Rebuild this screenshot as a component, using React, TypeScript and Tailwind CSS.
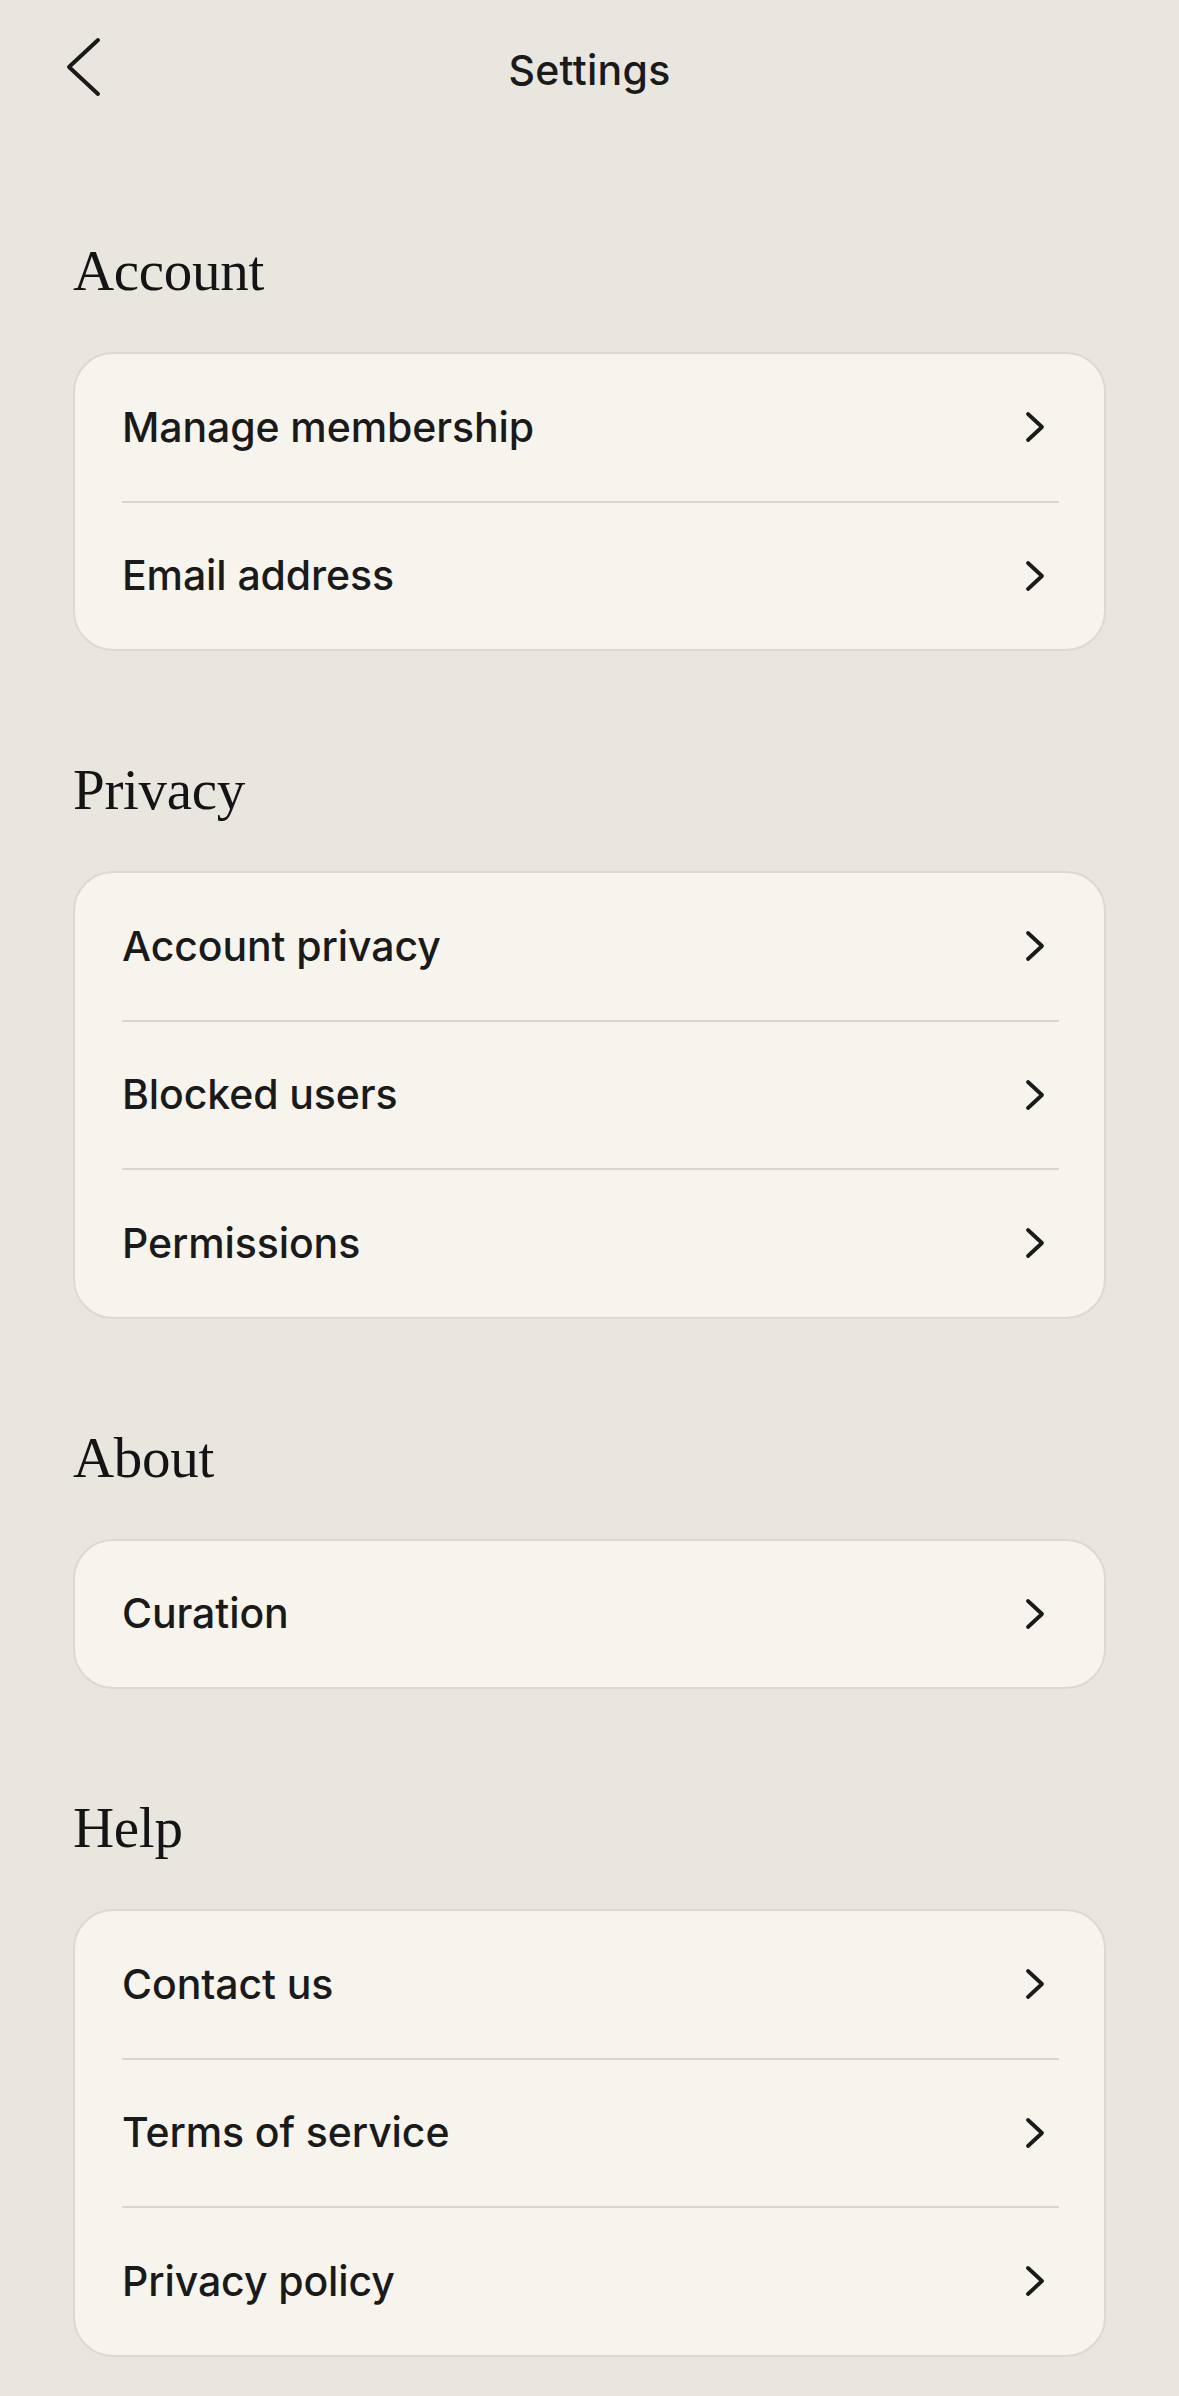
type Section = {
  title: string;
  items: string[];
};

const sections: Section[] = [
  { title: "Account", items: ["Manage membership", "Email address"] },
  { title: "Privacy", items: ["Account privacy", "Blocked users", "Permissions"] },
  { title: "About", items: ["Curation"] },
  { title: "Help", items: ["Contact us", "Terms of service", "Privacy policy"] },
];

const BackChevron = () => (
  <svg width="36" height="60" viewBox="0 0 36 60" fill="none" className="text-[#1a1a1a]">
    <polyline
      points="32,3 3,30 32,57"
      stroke="currentColor"
      strokeWidth="4"
      strokeLinecap="round"
      strokeLinejoin="round"
    />
  </svg>
);

const RowChevron = () => (
  <svg width="20" height="32" viewBox="0 0 20 32" fill="none" className="text-[#1a1a1a]">
    <polyline
      points="3,3 17,16 3,29"
      stroke="currentColor"
      strokeWidth="3.8"
      strokeLinecap="round"
      strokeLinejoin="round"
    />
  </svg>
);

const SettingsRow = ({ label, last }: { label: string; last: boolean }) => (
  <div className="ml-[47px] mr-[45px]">
    <div className="flex h-[146.5px] items-center justify-between">
      <span className="text-[41px] font-medium leading-none tracking-[-0.1px] text-[#1a1a1a]">{label}</span>
      <div className="mr-[14px]">
        <RowChevron />
      </div>
    </div>
    {!last && <div className="h-[2px] bg-[#d9d6cf]" />}
  </div>
);

export default function App() {
  return (
    <div
      className="min-h-screen bg-[#e9e6e0] px-[73px] pb-[40px]"
      style={{ fontFamily: "Inter, 'Noto Sans', sans-serif" }}
    >
      {/* Header */}
      <div className="-mx-[73px] grid h-[132px] grid-cols-[1fr_auto_1fr] items-center">
        <div className="pl-[66px] pt-[2px]">
          <BackChevron />
        </div>
        <h1 className="pt-[8px] text-[41px] font-medium leading-none tracking-[0.3px] text-[#1a1a1a]">
          Settings
        </h1>
        <div />
      </div>

      {sections.map((section) => (
        <section key={section.title} className="mt-[110px]">
          <h2
            className="mb-[54px] h-[56px] text-[57px] leading-none tracking-[-0.3px] text-[#141414]"
            style={{ fontFamily: "'Liberation Serif', 'DejaVu Serif', serif" }}
          >
            {section.title}
          </h2>
          <div className="overflow-hidden rounded-[40px] border-2 border-[#dcd9d1] bg-[#f7f4ed]">
            {section.items.map((item, i) => (
              <SettingsRow key={item} label={item} last={i === section.items.length - 1} />
            ))}
          </div>
        </section>
      ))}
    </div>
  );
}
